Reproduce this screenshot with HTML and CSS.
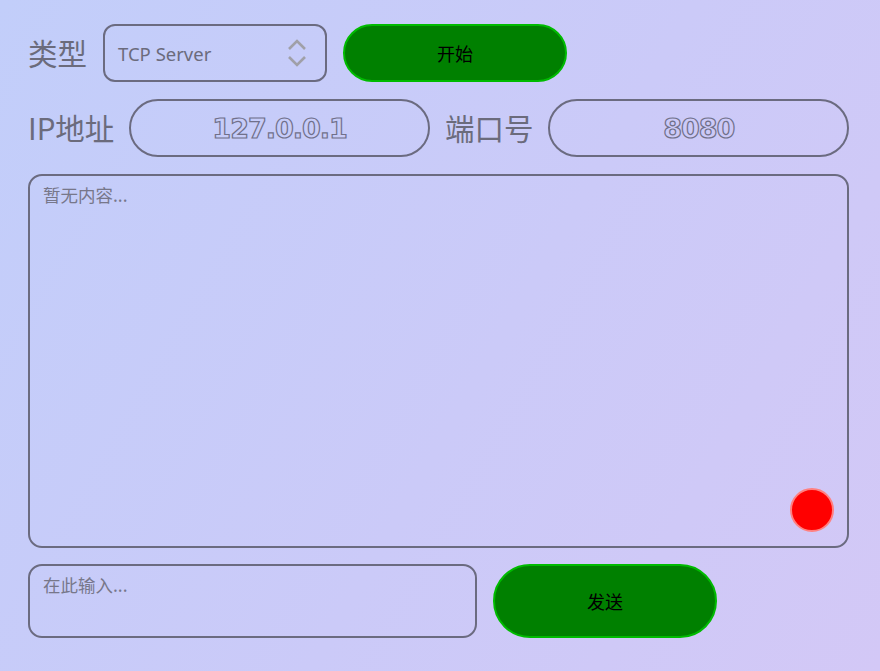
FILE: index.html
```html
<!DOCTYPE html>
<html lang="zh">
<head>
<meta charset="utf-8">
<title>TCP</title>
<link rel="stylesheet" href="styles.css">
</head>
<body>
<div class="app">
  <div class="row">
    <span class="label">类型</span>
    <div class="select">
      <span class="select-text">TCP Server</span>
      <svg class="chev" width="22" height="30" viewBox="0 0 22 30">
        <polyline points="3,11 11,3 19,11" fill="none" stroke="#a0a0a8" stroke-width="2.6"/>
        <polyline points="3,19 11,27 19,19" fill="none" stroke="#a0a0a8" stroke-width="2.6"/>
      </svg>
    </div>
    <button class="btn">开始</button>
  </div>
  <div class="row gap15">
    <span class="label">IP地址</span>
    <div class="pill-input"><span class="outline">127.0.0.1</span></div>
    <span class="label">端口号</span>
    <div class="pill-input"><span class="outline">8080</span></div>
  </div>
  <div class="log">
    <span class="placeholder">暂无内容...</span>
    <span class="dot"></span>
  </div>
  <div class="row bottom">
    <div class="send-input"><span class="placeholder">在此输入...</span></div>
    <button class="btn tall">发送</button>
  </div>
</div>
</body>
</html>
```
FILE: styles.css
```css
html, body {
  margin: 0;
  padding: 0;
  height: 100%;
}
body {
  background: linear-gradient(120deg, #c2cefa 0%, #cbcaf8 55%, #d3c8f6 100%);
  font-family: "Noto Sans CJK SC", "Noto Sans", sans-serif;
  color: #6b6b7c;
}
.app {
  width: 821px;
  padding: 24px 0 0 28px;
  display: flex;
  flex-direction: column;
  gap: 17px;
}
.row {
  display: flex;
  align-items: center;
  gap: 16px;
  height: 58px;
}
.row.gap15 {
  gap: 15px;
}
.label {
  font-size: 29.5px;
  line-height: 1;
  color: #6b6b7c;
  white-space: nowrap;
}
.select {
  box-sizing: border-box;
  width: 224px;
  height: 58px;
  border: 2px solid #6b6b80;
  border-radius: 12px;
  display: flex;
  align-items: center;
  justify-content: space-between;
  padding: 0 17px 0 13px;
}
.select-text {
  font-family: "Noto Sans", sans-serif;
  font-size: 18.5px;
  color: #6b6b7c;
}
.chev {
  display: block;
}
.btn {
  box-sizing: border-box;
  width: 224px;
  height: 58px;
  border: 2px solid #00bb00;
  border-radius: 29px;
  background: #008000;
  color: #000;
  font-family: "Noto Sans CJK SC", sans-serif;
  font-size: 18px;
  padding: 0;
}
.btn.tall {
  height: 74px;
  border-radius: 37px;
}
.pill-input {
  box-sizing: border-box;
  flex: 1;
  height: 58px;
  border: 2px solid #6b6b80;
  border-radius: 29px;
  display: flex;
  align-items: center;
  justify-content: center;
}
.outline {
  font-family: "DejaVu Sans", sans-serif;
  font-weight: bold;
  font-size: 27px;
  color: transparent;
  -webkit-text-stroke: 1.2px #70708a;
  letter-spacing: -1px;
}
.log {
  box-sizing: border-box;
  height: 374px;
  border: 2px solid #6b6b80;
  border-radius: 14px;
  position: relative;
  padding: 7px 13px;
}
.placeholder {
  font-size: 17.5px;
  line-height: 24px;
  color: #77778a;
}
.dot {
  position: absolute;
  right: 13px;
  bottom: 14px;
  box-sizing: border-box;
  width: 44px;
  height: 44px;
  border-radius: 50%;
  background: #ff0000;
  border: 2px solid #ff8080;
}
.row.bottom {
  height: 74px;
  margin-top: -1px;
}
.send-input {
  box-sizing: border-box;
  width: 449px;
  height: 74px;
  border: 2px solid #6b6b80;
  border-radius: 14px;
  padding: 7px 13px;
}
```
